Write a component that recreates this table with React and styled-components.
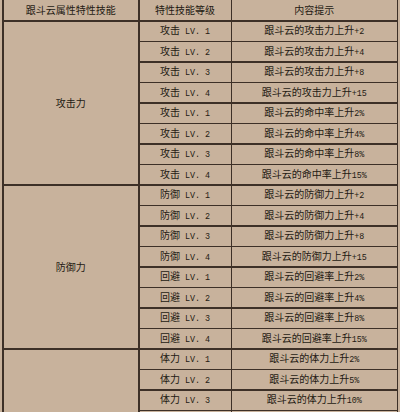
import React from "react";
import styled, { createGlobalStyle } from "styled-components";

const Global = createGlobalStyle`
  html, body {
    margin: 0;
    padding: 0;
    background: #c8b29c;
    overflow: hidden;
  }
`;

const Page = styled.div`
  width: 400px;
  height: 412px;
  overflow: hidden;
  box-sizing: border-box;
  padding: 0 2px;
  background: #c8b29c;
`;

const Table = styled.div`
  display: grid;
  grid-template-columns: 134.5px 91px 164.5px;
  grid-template-rows: 20px;
  grid-auto-rows: 19px;
  gap: 1.5px;
  padding: 0 1.5px 1.5px 1.5px;
  background: #3d3027;
  font-family: "Noto Sans CJK SC", "Noto Sans", sans-serif;
  font-size: 10px;
  color: #241a13;
`;

const Cell = styled.div`
  display: flex;
  align-items: center;
  justify-content: center;
  background: #c8b29c;
  white-space: nowrap;
  grid-row: ${(p) => (p.$span ? `span ${p.$span}` : "auto")};
  grid-column: ${(p) => p.$col};
`;

const Text = styled.span`
  display: inline-block;
  line-height: 12px;
  white-space: nowrap;
`;

const Latin = styled.span`
  font-family: "Liberation Mono", monospace;
  font-size: 8.4px;
  white-space: pre;
`;

const groups = [
  {
    label: "攻击力",
    rows: [
      ["攻击", "1", "跟斗云的攻击力上升", "+2"],
      ["攻击", "2", "跟斗云的攻击力上升", "+4"],
      ["攻击", "3", "跟斗云的攻击力上升", "+8"],
      ["攻击", "4", "跟斗云的攻击力上升", "+15"],
      ["攻击", "1", "跟斗云的命中率上升", "2%"],
      ["攻击", "2", "跟斗云的命中率上升", "4%"],
      ["攻击", "3", "跟斗云的命中率上升", "8%"],
      ["攻击", "4", "跟斗云的命中率上升", "15%"],
    ],
  },
  {
    label: "防御力",
    rows: [
      ["防御", "1", "跟斗云的防御力上升", "+2"],
      ["防御", "2", "跟斗云的防御力上升", "+4"],
      ["防御", "3", "跟斗云的防御力上升", "+8"],
      ["防御", "4", "跟斗云的防御力上升", "+15"],
      ["回避", "1", "跟斗云的回避率上升", "2%"],
      ["回避", "2", "跟斗云的回避率上升", "4%"],
      ["回避", "3", "跟斗云的回避率上升", "8%"],
      ["回避", "4", "跟斗云的回避率上升", "15%"],
    ],
  },
  {
    label: "",
    rows: [
      ["体力", "1", "跟斗云的体力上升", "2%"],
      ["体力", "2", "跟斗云的体力上升", "5%"],
      ["体力", "3", "跟斗云的体力上升", "10%"],
      null,
    ],
  },
];

export default function App() {
  return (
    <>
      <Global />
      <Page>
        <Table>
          <Cell>
            <Text>跟斗云属性特性技能</Text>
          </Cell>
          <Cell>
            <Text>特性技能等级</Text>
          </Cell>
          <Cell>
            <Text>内容提示</Text>
          </Cell>
          {groups.map((g, gi) => (
            <React.Fragment key={gi}>
              <Cell $span={g.rows.length} $col="1">
                <Text>{g.label}</Text>
              </Cell>
              {g.rows.map((r, ri) =>
                r ? (
                  <React.Fragment key={ri}>
                    <Cell $col="2">
                      <Text>
                        {r[0]}
                        <Latin>{` LV. ${r[1]}`}</Latin>
                      </Text>
                    </Cell>
                    <Cell $col="3">
                      <Text>
                        {r[2]}
                        <Latin>{r[3]}</Latin>
                      </Text>
                    </Cell>
                  </React.Fragment>
                ) : (
                  <React.Fragment key={ri}>
                    <Cell $col="2" />
                    <Cell $col="3" />
                  </React.Fragment>
                )
              )}
            </React.Fragment>
          ))}
        </Table>
      </Page>
    </>
  );
}
